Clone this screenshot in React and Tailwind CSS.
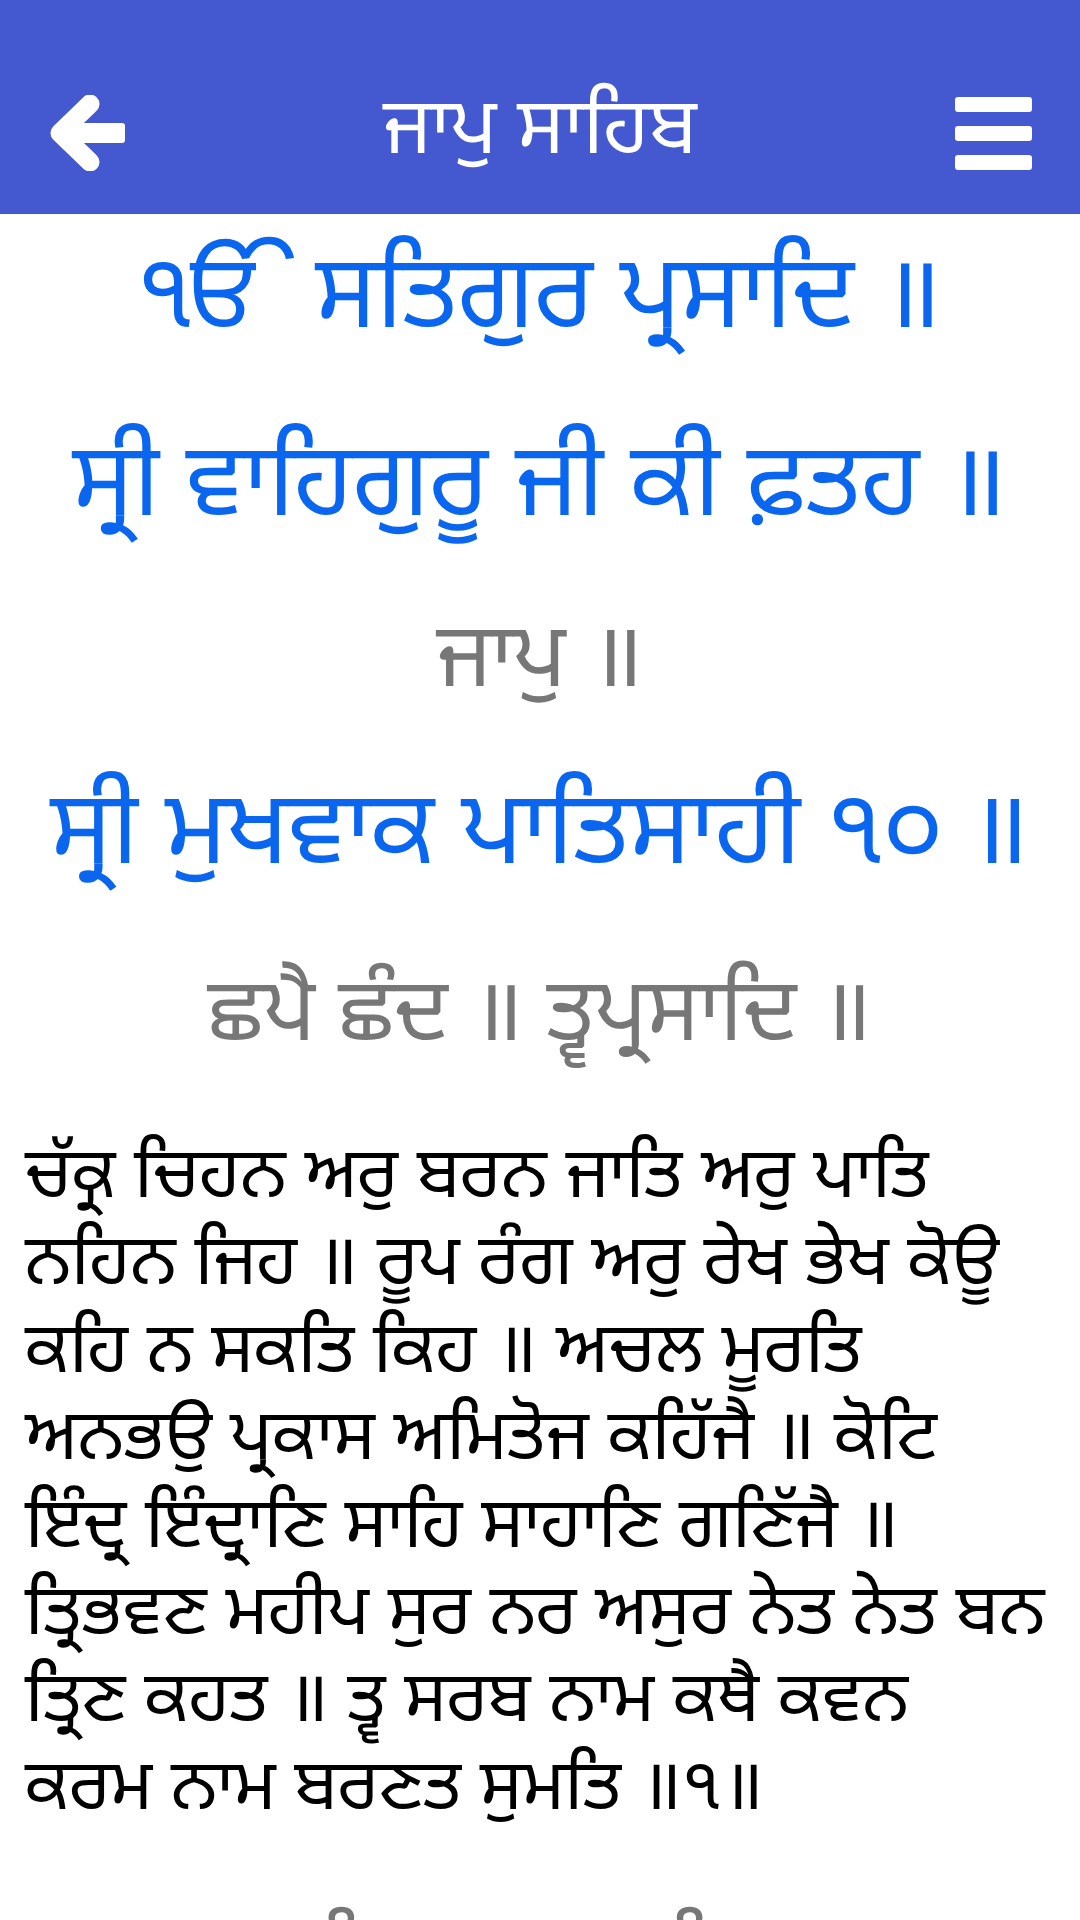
import { useState } from 'react';

const gurmukhi = { fontFamily: '"Noto Sans Gurmukhi", "Noto Sans", "Lohit Gurmukhi", "Raavi", sans-serif' };

const verse = [
  'ਚੱਕ੍ਰ ਚਿਹਨ ਅਰੁ ਬਰਨ ਜਾਤਿ ਅਰੁ ਪਾਤਿ',
  'ਨਹਿਨ ਜਿਹ ॥ ਰੂਪ ਰੰਗ ਅਰੁ ਰੇਖ ਭੇਖ ਕੋਊ',
  'ਕਹਿ ਨ ਸਕਤਿ ਕਿਹ ॥ ਅਚਲ ਮੂਰਤਿ',
  'ਅਨਭਉ ਪ੍ਰਕਾਸ ਅਮਿਤੋਜ ਕਹਿੱਜੈ ॥ ਕੋਟਿ',
  'ਇੰਦ੍ਰ ਇੰਦ੍ਰਾਣਿ ਸਾਹਿ ਸਾਹਾਣਿ ਗਣਿੱਜੈ ॥',
  'ਤ੍ਰਿਭਵਣ ਮਹੀਪ ਸੁਰ ਨਰ ਅਸੁਰ ਨੇਤ ਨੇਤ ਬਨ',
  'ਤ੍ਰਿਣ ਕਹਤ ॥ ਤ੍ਵ ਸਰਬ ਨਾਮ ਕਥੈ ਕਵਨ',
  'ਕਰਮ ਨਾਮ ਬਰਣਤ ਸੁਮਤਿ ॥੧॥',
];

function BackArrow() {
  return (
    <svg viewBox="0 0 76 76" className="h-[76px] w-[76px]">
      <path d="M41 9 L11 38 L41 67" fill="none" stroke="white" strokeWidth="19" strokeLinecap="round" strokeLinejoin="round" />
      <rect x="16" y="28" width="60" height="20" rx="3" fill="white" />
    </svg>
  );
}

function Hamburger() {
  return (
    <div className="flex w-[77px] flex-col gap-[14px]">
      <div className="h-[15px] rounded-[3px] bg-white" />
      <div className="h-[15px] rounded-[3px] bg-white" />
      <div className="h-[15px] rounded-[3px] bg-white" />
    </div>
  );
}

export default function App() {
  const [menuOpen, setMenuOpen] = useState(false);

  return (
    <div className="h-[1920px] w-[1080px] overflow-hidden bg-white" style={gurmukhi}>
      <header className="flex h-[214px] items-center justify-between bg-[#4459cf] pl-[49px] pr-[48px] pt-[52px]">
        <button className="flex items-center">
          <BackArrow />
        </button>
        <h1 className="text-[79px] leading-none text-white">ਜਾਪੁ ਸਾਹਿਬ</h1>
        <button className="flex items-center" onClick={() => setMenuOpen(!menuOpen)}>
          <Hamburger />
        </button>
      </header>

      <main className="flex flex-col">
        <div className="flex flex-col items-center text-center">
          <p className="mt-[9px] whitespace-nowrap text-[102px] leading-[160px] text-[#0a66ee]">ੴ ਸਤਿਗੁਰ ਪ੍ਰਸਾਦਿ ॥</p>
          <p className="mt-[28px] whitespace-nowrap text-[102px] leading-[160px] text-[#0a66ee]">ਸ੍ਰੀ ਵਾਹਿਗੁਰੂ ਜੀ ਕੀ ਫ਼ਤਹ ॥</p>
          <p className="mt-[13px] whitespace-nowrap text-[90px] leading-[160px] text-[#777777]">ਜਾਪੁ ॥</p>
          <p className="mt-[14px] whitespace-nowrap text-[103px] leading-[160px] text-[#0a66ee]">ਸ੍ਰੀ ਮੁਖਵਾਕ ਪਾਤਿਸਾਹੀ ੧੦ ॥</p>
          <p className="mt-[21px] whitespace-nowrap text-[88px] leading-[160px] text-[#777777]">ਛਪੈ ਛੰਦ ॥ ਤ੍ਵਪ੍ਰਸਾਦਿ ॥</p>
        </div>

        <div className="mt-[37px] flex flex-col pl-[25px] text-[71px] leading-[87.4px] text-black">
          {verse.map((line) => (
            <p key={line} className="whitespace-nowrap">{line}</p>
          ))}
        </div>

        <p className="mt-[48px] whitespace-nowrap text-center text-[88px] leading-[160px] text-[#777777]">ਭੁਜੰਗ ਪ੍ਰਯਾਤ ਛੰਦ ॥</p>
      </main>
    </div>
  );
}
